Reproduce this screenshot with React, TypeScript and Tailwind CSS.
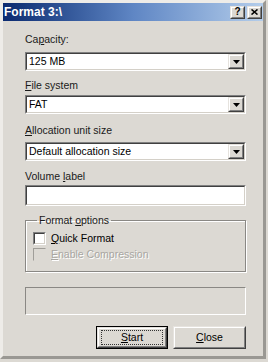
import type { ReactNode } from "react";

const sunkenOuter = "border border-t-[#808080] border-l-[#808080] border-b-white border-r-white";
const sunkenInner = "border border-t-[#404040] border-l-[#404040] border-b-[#d4d0c8] border-r-[#d4d0c8]";
const raisedOuter = "border border-t-[#e6e3de] border-l-[#e6e3de] border-b-[#404040] border-r-[#404040]";
const raisedInner = "border border-t-white border-l-white border-b-[#808080] border-r-[#808080]";

function Raised({ className = "", children }: { className?: string; children?: ReactNode }) {
  return (
    <div className={`${raisedOuter} ${className}`}>
      <div className={`${raisedInner} h-full w-full bg-[#dcd9d3] flex items-center justify-center`}>
        {children}
      </div>
    </div>
  );
}

function Combo({ value }: { value: string }) {
  return (
    <div className={`${sunkenOuter} h-[19px]`}>
      <div className={`${sunkenInner} h-full bg-white flex items-center`}>
        <span className="flex-1 pl-[2px] leading-none text-black">{value}</span>
        <Raised className="h-full w-[16px]">
          <svg width="7" height="4" viewBox="0 0 7 4">
            <path d="M0 0h7L3.5 4z" fill="#000" />
          </svg>
        </Raised>
      </div>
    </div>
  );
}

function Label({ children, className = "" }: { children: ReactNode; className?: string }) {
  return <div className={`leading-[13px] text-[#1a1a1a] ${className}`}>{children}</div>;
}

export default function App() {
  return (
    <div className="w-[268px] h-[362px] bg-[#dcd9d3] font-['Liberation_Sans',Arial,sans-serif] text-[10.5px] text-black overflow-hidden">
      <div className="h-[359px] w-[266px] border-[3px] border-t-[#eeece8] border-l-[#eeece8] border-b-[#9a9893] border-r-[#9a9893] flex flex-col">
        {/* title bar */}
        <div className="h-[18px] bg-gradient-to-r from-[#0b2a70] via-[#5f86c4] to-[#b4cdea] flex items-center justify-between pl-[1px] pr-[1px]">
          <span className="text-white font-bold text-[12px] leading-none">Format 3:\</span>
          <div className="flex gap-[2px]">
            <Raised className="w-[15px] h-[13px]">
              <span className="font-bold text-[10px] leading-none">?</span>
            </Raised>
            <Raised className="w-[15px] h-[13px]">
              <svg width="7" height="6" viewBox="0 0 7 6">
                <path d="M0.5 0.5L6.5 5.5M6.5 0.5L0.5 5.5" stroke="#000" strokeWidth="1.6" />
              </svg>
            </Raised>
          </div>
        </div>

        {/* body */}
        <div className="flex flex-col pl-[22px] pr-[17px]">
          <Label className="mt-[12px]">
            Ca<span className="underline">p</span>acity:
          </Label>
          <div className="mt-[6px]">
            <Combo value="125 MB" />
          </div>

          <Label className="mt-[8px]">
            <span className="underline">F</span>ile system
          </Label>
          <div className="mt-[3px]">
            <Combo value="FAT" />
          </div>

          <Label className="mt-[10px]">
            <span className="underline">A</span>llocation unit size
          </Label>
          <div className="mt-[5px]">
            <Combo value="Default allocation size" />
          </div>

          <Label className="mt-[9px]">
            Volume <span className="underline">l</span>abel
          </Label>
          <div className={`${sunkenOuter} mt-[2px] h-[21px]`}>
            <div className={`${sunkenInner} h-full bg-white`} />
          </div>

          <fieldset className="mt-[8px] h-[58px] border border-[#8a8884] shadow-[inset_1px_1px_0_#ffffff,1px_1px_0_#ffffff] px-[7px]">
            <legend className="ml-[4px] px-[2px] leading-[12px] text-[#1a1a1a]">
              Format <span className="underline">o</span>ptions
            </legend>
            <div className="flex items-center gap-[5px] mt-[6px]">
              <div className={`${sunkenOuter} w-[13px] h-[13px]`}>
                <div className={`${sunkenInner} h-full bg-white`} />
              </div>
              <span className="leading-none">
                <span className="underline">Q</span>uick Format
              </span>
            </div>
            <div className="flex items-center gap-[5px] mt-[3px]">
              <div className="w-[13px] h-[13px] border border-t-[#a09e99] border-l-[#a09e99] border-b-transparent border-r-transparent" />
              <span className="leading-none text-[#a8a6a1] [text-shadow:1px_1px_0_#ffffff]">
                <span className="underline">E</span>nable Compression
              </span>
            </div>
          </fieldset>

          <div className="mt-[15px] h-[28px] border border-t-[#8a8884] border-l-[#8a8884] border-b-white border-r-white" />

          <div className="mt-[11px] flex justify-end gap-[5px]">
            <div className="w-[72px] h-[23px] border border-black">
              <Raised className="h-full w-full">
                <div className="w-[62px] h-[15px] border border-dotted border-[#333] flex items-center justify-center">
                  <span className="leading-none">
                    <span className="underline">S</span>tart
                  </span>
                </div>
              </Raised>
            </div>
            <Raised className="w-[73px] h-[23px]">
              <span className="leading-none">
                <span className="underline">C</span>lose
              </span>
            </Raised>
          </div>
        </div>
      </div>
    </div>
  );
}
